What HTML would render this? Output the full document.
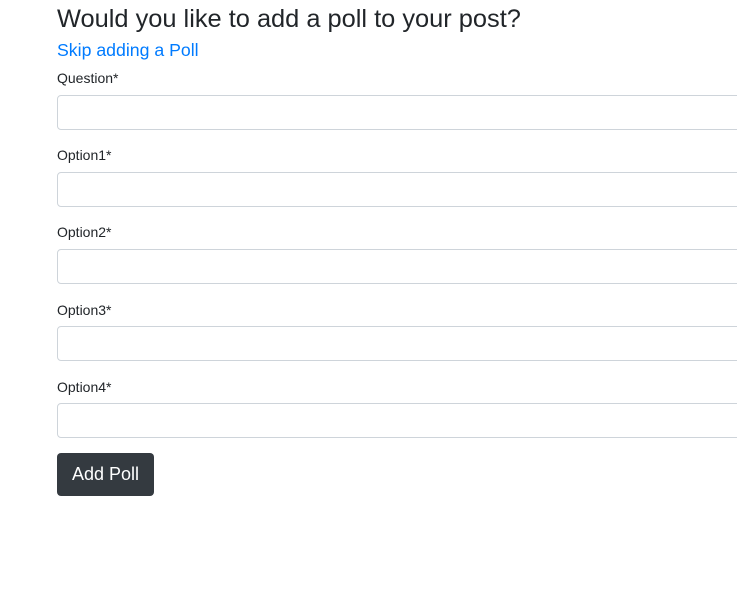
<!DOCTYPE html>
<html><head><style>
body{margin:0;background:#fff;font-family:"Liberation Sans",sans-serif;color:#212529;width:737px;height:608px;overflow:hidden;position:relative}
h2{position:absolute;left:57px;top:4px;margin:0;font-size:25.4px;font-weight:400;line-height:30px}
a{position:absolute;left:57px;top:39px;color:#007bff;font-size:17.7px;text-decoration:none;line-height:22px}
.l{position:absolute;left:57px;font-size:14px;line-height:17px}
.i{position:absolute;left:57px;width:700px;height:35px;border:1px solid #ced4da;border-radius:4px;box-sizing:border-box}
.b{position:absolute;left:57px;top:453px;width:97px;height:43px;background:#343a40;color:#fff;border-radius:4px;font-size:18px;line-height:43px;text-align:center}
</style></head><body>
<h2>Would you like to add a poll to your post?</h2>
<a>Skip adding a Poll</a>
<div class="l" style="top:70px">Question*</div><div class="i" style="top:95px"></div>
<div class="l" style="top:147px">Option1*</div><div class="i" style="top:172px"></div>
<div class="l" style="top:224px">Option2*</div><div class="i" style="top:249px"></div>
<div class="l" style="top:302px">Option3*</div><div class="i" style="top:326px"></div>
<div class="l" style="top:379px">Option4*</div><div class="i" style="top:403px"></div>
<div class="b">Add Poll</div>
</body></html>
